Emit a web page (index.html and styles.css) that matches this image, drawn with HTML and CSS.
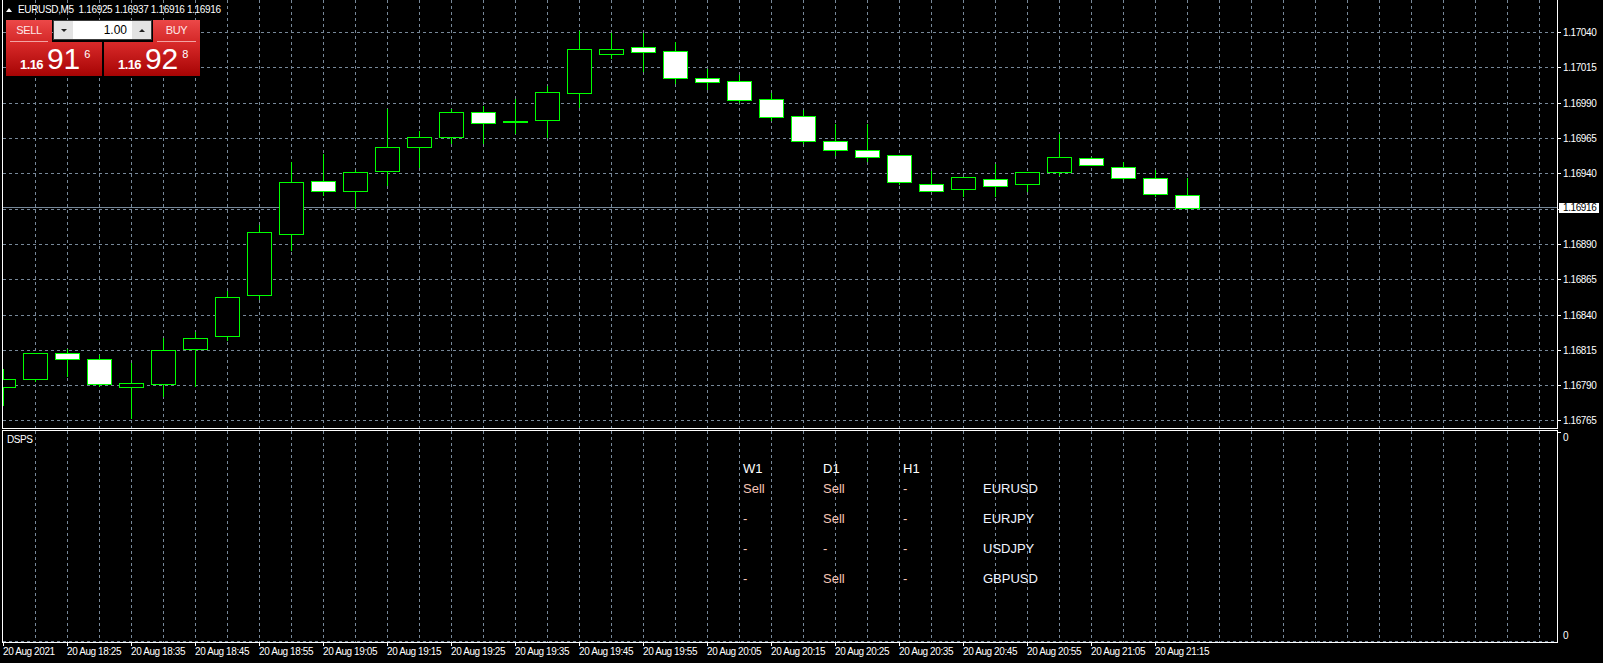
FILE: index.html
```html
<!DOCTYPE html>
<html lang="en">
  <head>
    <meta charset="UTF-8" />
    <meta name="viewport" content="width=device-width, initial-scale=1.0" />
    <title>EURUSD,M5</title>
    <link rel="stylesheet" href="styles.css">
  </head>
  <body>
    <div class="chart">
      <div class="pane main-pane">
        <svg id="mainChart" class="pane-svg" width="1554" height="428" viewBox="3 0 1554 428"></svg>

        <div class="chart-title">
          <span class="title-arrow"></span>
          <span>EURUSD,M5&nbsp; 1.16925 1.16937 1.16916 1.16916</span>
        </div>

        <div class="trade-panel">
          <div class="trade-row">
            <div class="trade-tab">SELL</div>
            <div class="lot-box">
              <span class="lot-btn"><span class="arrow-down"></span></span>
              <span class="lot-value">1.00</span>
              <span class="lot-btn"><span class="arrow-up"></span></span>
            </div>
            <div class="trade-tab buy-tab">BUY</div>
          </div>
          <div class="trade-row quotes">
            <div class="quote">
              <span class="quote-figure">1.16</span>
              <span class="quote-pips">91</span>
              <span class="quote-point">6</span>
            </div>
            <div class="quote">
              <span class="quote-figure">1.16</span>
              <span class="quote-pips">92</span>
              <span class="quote-point">8</span>
            </div>
          </div>
        </div>
      </div>

      <div class="axis">
        <svg id="priceAxis" class="pane-svg" width="45" height="429" viewBox="1558 0 45 429"></svg>
      </div>

      <div class="pane sub-pane">
        <svg id="subChart" class="pane-svg" width="1554" height="211" viewBox="3 431 1554 211"></svg>
        <div class="indicator-name">DSPS</div>
        <div class="signal-table">
          <span class="col-head">W1</span><span class="col-head">D1</span><span class="col-head">H1</span><span></span>
          <span class="signal">Sell</span><span class="signal">Sell</span><span class="signal">-</span><span class="symbol">EURUSD</span>
          <span class="signal">-</span><span class="signal">Sell</span><span class="signal">-</span><span class="symbol">EURJPY</span>
          <span class="signal">-</span><span class="signal">-</span><span class="signal">-</span><span class="symbol">USDJPY</span>
          <span class="signal">-</span><span class="signal">Sell</span><span class="signal">-</span><span class="symbol">GBPUSD</span>
        </div>
      </div>

      <div class="axis">
        <svg id="subAxis" class="pane-svg" width="45" height="214" viewBox="1558 429 45 214"></svg>
      </div>

      <div class="time-axis">
        <svg id="timeAxis" class="pane-svg" width="1603" height="20" viewBox="0 643 1603 20"></svg>
      </div>
    </div>

    <script>
      document.addEventListener("DOMContentLoaded", () => {
        // M5 bars from 18:15, [open, high, low, close]
        const candles = [
          [1.16789, 1.16802, 1.16776, 1.16795],
          [1.16795, 1.16813, 1.16793, 1.16813],
          [1.16813, 1.16816, 1.16797, 1.16809],
          [1.16809, 1.16812, 1.1679, 1.16791],
          [1.16789, 1.16806, 1.16767, 1.16792],
          [1.16791, 1.16824, 1.16783, 1.16815],
          [1.16816, 1.16828, 1.1679, 1.16824],
          [1.16825, 1.16857, 1.16822, 1.16853],
          [1.16854, 1.16904, 1.16851, 1.16899],
          [1.16897, 1.16948, 1.16886, 1.16934],
          [1.16935, 1.16954, 1.16925, 1.16928],
          [1.16928, 1.16943, 1.16916, 1.16941],
          [1.16942, 1.16986, 1.16932, 1.16959],
          [1.16959, 1.1697, 1.16945, 1.16966],
          [1.16966, 1.16986, 1.16962, 1.16984],
          [1.16984, 1.16988, 1.16962, 1.16976],
          [1.16977, 1.16993, 1.16969, 1.16977],
          [1.16978, 1.17002, 1.16966, 1.16998],
          [1.16997, 1.17041, 1.16987, 1.17028],
          [1.17025, 1.1704, 1.17022, 1.17028],
          [1.1703, 1.1704, 1.17013, 1.17026],
          [1.17027, 1.17033, 1.17004, 1.17008],
          [1.17008, 1.17014, 1.17, 1.17005],
          [1.17006, 1.1701, 1.16991, 1.16992],
          [1.16993, 1.16997, 1.16978, 1.1698],
          [1.16981, 1.16985, 1.16962, 1.16963],
          [1.16963, 1.16975, 1.16953, 1.16957],
          [1.16957, 1.16975, 1.16949, 1.16952],
          [1.16953, 1.16953, 1.16933, 1.16934],
          [1.16933, 1.16942, 1.16928, 1.16928],
          [1.16929, 1.16938, 1.16924, 1.16938],
          [1.16936, 1.16947, 1.16924, 1.16931],
          [1.16933, 1.16941, 1.16928, 1.16941],
          [1.16941, 1.16968, 1.16939, 1.16952],
          [1.16951, 1.16952, 1.16946, 1.16946],
          [1.16945, 1.16948, 1.16936, 1.16937],
          [1.16937, 1.16943, 1.16924, 1.16926],
          [1.16925, 1.16937, 1.16916, 1.16916],
        ];

        const topPrice = 1.1704;
        const topY = 32.5;
        const pxPerPoint = 1.4125;
        const gridStep = 0.00025;
        const bid = 1.16916;
        const firstX = 3;
        const barStep = 32;
        const rightEdge = 1557;

        const priceY = (p) => topY + (topPrice - p) * 100000 * pxPerPoint;
        const lineY = (p) => Math.floor(priceY(p)) + 0.5;

        // メインチャート
        let main = "";
        for (let x = 35; x < rightEdge; x += barStep) {
          main += `<line class="grid" x1="${x + 0.5}" y1="0" x2="${x + 0.5}" y2="428"/>`;
        }
        const levels = [];
        for (let i = 0; i < 12; i++) levels.push(+(topPrice - i * gridStep).toFixed(5));
        levels.forEach((p) => {
          main += `<line class="grid" x1="3" y1="${lineY(p)}" x2="${rightEdge}" y2="${lineY(p)}"/>`;
        });
        main += `<line class="bid-line" x1="3" y1="${lineY(bid)}" x2="${rightEdge}" y2="${lineY(bid)}"/>`;

        candles.forEach(([o, h, l, c], i) => {
          const cx = firstX + i * barStep;
          const yo = Math.round(priceY(o));
          const yc = Math.round(priceY(c));
          const top = Math.min(yo, yc);
          const height = Math.max(Math.abs(yo - yc), 1);
          const kind = c >= o ? "bull" : "bear";
          main += `<line class="wick" x1="${cx + 0.5}" y1="${Math.round(priceY(h))}" x2="${cx + 0.5}" y2="${Math.round(priceY(l)) + 1}"/>`;
          main += `<rect class="body ${kind}" x="${cx - 11.5}" y="${top + 0.5}" width="24" height="${height}"/>`;
        });
        document.getElementById("mainChart").innerHTML = main;

        // 価格軸
        let axis = "";
        levels.forEach((p) => {
          const y = Math.floor(priceY(p));
          axis += `<line class="tick" x1="1558" y1="${y + 0.5}" x2="1561" y2="${y + 0.5}"/>`;
          axis += `<text class="axis-label" x="1563" y="${y + 4}">${p.toFixed(5)}</text>`;
        });
        const bidRow = Math.floor(priceY(bid));
        axis += `<rect class="bid-box" x="1559" y="${bidRow - 4}" width="40" height="10"/>`;
        axis += `<text class="axis-label bid-label" x="1563" y="${bidRow + 4}">${bid.toFixed(5)}</text>`;
        document.getElementById("priceAxis").innerHTML = axis;

        // サブウィンドウ
        let sub = "";
        for (let x = 35; x < rightEdge; x += barStep) {
          sub += `<line class="grid" x1="${x + 0.5}" y1="431" x2="${x + 0.5}" y2="642"/>`;
        }
        sub += `<line class="grid" x1="3" y1="641.5" x2="${rightEdge}" y2="641.5"/>`;
        document.getElementById("subChart").innerHTML = sub;

        document.getElementById("subAxis").innerHTML =
          `<line class="tick" x1="1558" y1="432.5" x2="1561" y2="432.5"/>` +
          `<text class="axis-label" x="1563" y="441">0</text>` +
          `<text class="axis-label" x="1563" y="639">0</text>`;

        // 時間軸
        let time = "";
        for (let m = 0; m < 19; m++) {
          const x = firstX + m * barStep * 2;
          const minutes = 18 * 60 + 15 + m * 10;
          const hh = String(Math.floor(minutes / 60)).padStart(2, "0");
          const mm = String(minutes % 60).padStart(2, "0");
          const label = m === 0 ? "20 Aug 2021" : `20 Aug ${hh}:${mm}`;
          time += `<line class="tick" x1="${x + 0.5}" y1="643" x2="${x + 0.5}" y2="646"/>`;
          time += `<text class="axis-label" x="${x}" y="655">${label}</text>`;
        }
        document.getElementById("timeAxis").innerHTML = time;
      });
    </script>
  </body>
</html>
```

FILE: styles.css
```css
body {
  margin: 0;
  background-color: #000;
  color: #fff;
  font-family: "Liberation Sans", Arial, sans-serif;
  overflow: hidden;
}
.chart {
  display: grid;
  grid-template-columns: 1558px 45px;
  grid-template-rows: 429px 214px 20px;
  width: 1603px;
  height: 663px;
}
.pane {
  position: relative;
  margin-left: 2px;
  border-left: 1px solid #fff;
  border-right: 1px solid #fff;
  overflow: hidden;
}
.main-pane {
  border-bottom: 1px solid #fff;
}
.sub-pane {
  margin-top: 1px;
  border-top: 1px solid #fff;
  border-bottom: 1px solid #fff;
}
.pane-svg {
  display: block;
}
.sub-pane .pane-svg {
  position: absolute;
  top: 0;
  left: 0;
}
.time-axis {
  grid-column: 1 / 3;
}

/* svg parts */
.grid {
  stroke: #778899;
  stroke-width: 1;
  stroke-dasharray: 3 3;
  shape-rendering: crispEdges;
}
.bid-line {
  stroke: #778899;
  shape-rendering: crispEdges;
}
.wick {
  stroke: #00ff00;
  shape-rendering: crispEdges;
}
.body {
  stroke: #00ff00;
  shape-rendering: crispEdges;
}
.body.bull {
  fill: #000;
}
.body.bear {
  fill: #fff;
}
.tick {
  stroke: #fff;
  shape-rendering: crispEdges;
}
.axis-label {
  fill: #fff;
  font-family: "Liberation Sans", Arial, sans-serif;
  font-size: 10px;
  letter-spacing: -0.4px;
}
.bid-box {
  fill: #fff;
}
.bid-label {
  fill: #000;
}

/* title */
.chart-title {
  position: absolute;
  top: 4px;
  left: 3px;
  display: flex;
  align-items: center;
  gap: 6px;
  font-size: 10px;
  line-height: 12px;
  letter-spacing: -0.35px;
  white-space: nowrap;
}
.title-arrow {
  width: 0;
  height: 0;
  border-left: 3.5px solid transparent;
  border-right: 3.5px solid transparent;
  border-bottom: 4px solid #fff;
}

/* one click trading */
.trade-panel {
  position: absolute;
  top: 20px;
  left: 3px;
  width: 194px;
}
.trade-row {
  display: flex;
  justify-content: space-between;
}
.trade-tab {
  position: relative;
  width: 46px;
  height: 22px;
  background: linear-gradient(#ec4848, #d42828);
  color: #fde8e8;
  font-size: 11px;
  line-height: 21px;
  text-align: center;
  letter-spacing: -0.3px;
}
.trade-tab::after {
  content: "";
  position: absolute;
  left: 4px;
  right: 4px;
  bottom: 0;
  height: 1px;
  background-color: #f3a3a3;
}
.buy-tab {
  width: 47px;
}
.lot-box {
  display: flex;
  width: 99px;
  height: 20px;
  box-sizing: border-box;
  border: 1px solid #3c3c3c;
  background-color: #fff;
}
.lot-btn {
  display: flex;
  align-items: center;
  justify-content: center;
  width: 19px;
  background-color: #e3e3e3;
}
.arrow-down,
.arrow-up {
  width: 0;
  height: 0;
  border-left: 3px solid transparent;
  border-right: 3px solid transparent;
}
.arrow-down {
  border-top: 3px solid #222;
}
.arrow-up {
  border-bottom: 3px solid #222;
}
.lot-value {
  flex: 1;
  padding-right: 5px;
  color: #000;
  font-size: 12px;
  line-height: 18px;
  text-align: right;
}
.quotes {
  justify-content: flex-start;
  gap: 2px;
}
.quote {
  display: flex;
  align-items: baseline;
  width: 96px;
  height: 34px;
  box-sizing: border-box;
  padding: 2px 0 0 14px;
  background: linear-gradient(#d92a2a, #a60404);
  white-space: nowrap;
}
.quote-figure {
  font-size: 13px;
  font-weight: bold;
  letter-spacing: -0.6px;
}
.quote-pips {
  margin-left: 4px;
  font-size: 30px;
  line-height: 30px;
}
.quote-point {
  align-self: flex-start;
  margin: 4px 0 0 4px;
  font-size: 11px;
  line-height: 12px;
}

/* indicator window */
.indicator-name {
  position: relative;
  padding: 3px 0 0 4px;
  font-size: 10px;
  line-height: 12px;
  letter-spacing: -0.4px;
}
.signal-table {
  position: relative;
  display: grid;
  grid-template-columns: 80px 80px 80px 80px;
  grid-template-rows: 20px 30px 30px 30px 20px;
  margin: 13px 0 0 740px;
  font-size: 13px;
  line-height: 20px;
}
.col-head {
  color: #fff;
}
.signal {
  color: #f5c6b8;
}
.symbol {
  color: #f0f4ff;
}
```
